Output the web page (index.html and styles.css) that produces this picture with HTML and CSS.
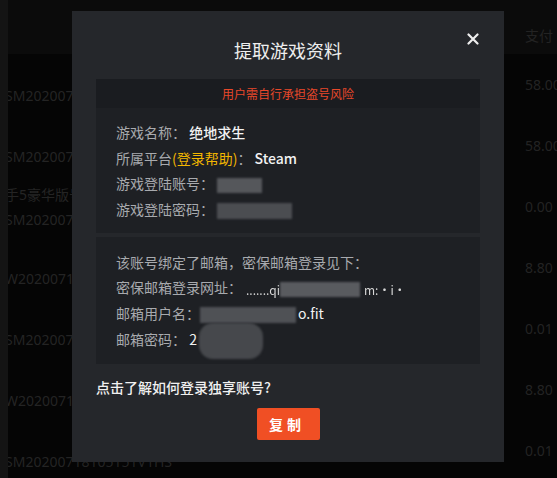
FILE: index.html
```html
<!DOCTYPE html>
<html lang="zh">
<head>
<meta charset="utf-8">
<title>提取游戏资料</title>
<link rel="stylesheet" href="styles.css">
</head>
<body>
<div class="page">
  <div class="strip"></div>
  <div class="main">
    <div class="thead"><div class="c1"></div><div class="c2">支付</div></div>
    <div class="row"><div class="c1 off">SM20200718105151V1HS</div><div class="c2">58.00</div></div>
    <div class="row"><div class="c1 off">SM20200718105151V1HS</div><div class="c2">58.00</div></div>
    <div class="row"><div class="c1"><div>手5豪华版号</div><div>SM20200718105151V1HS</div></div><div class="c2">0.00</div></div>
    <div class="row"><div class="c1 off">W20200718105151V1HS</div><div class="c2">8.80</div></div>
    <div class="row"><div class="c1 off">SM20200718105151V1HS</div><div class="c2">0.01</div></div>
    <div class="row"><div class="c1 off">W20200718105151V1HS</div><div class="c2">8.80</div></div>
    <div class="row"><div class="c1 off">SM20200718105151V1HS</div><div class="c2">0.01</div></div>
  </div>
</div>

<div class="modal">
  <div class="modal-head">
    <h2 class="title">提取游戏资料</h2>
    <button class="close" aria-label="关闭">
      <svg width="12" height="12" viewBox="0 0 12 12"><path d="M1.5 1.5 L10.5 10.5 M10.5 1.5 L1.5 10.5" stroke="#eeeeee" stroke-width="2.2" stroke-linecap="round"/></svg>
    </button>
  </div>

  <div class="box">
    <div class="warn">用户需自行承担盗号风险</div>
    <div class="box-body">
      <div class="line"><span class="lbl">游戏名称：</span> <span class="val">绝地求生</span></div>
      <div class="line"><span class="lbl">所属平台<span class="help">(登录帮助)</span>：</span> <span class="val">Steam</span></div>
      <div class="line"><span class="lbl">游戏登陆账号：</span><span class="mask m1"></span></div>
      <div class="line"><span class="lbl">游戏登陆密码：</span><span class="mask m2"></span></div>
    </div>
  </div>

  <div class="box box2">
    <div class="box-body b2">
      <div class="line"><span class="lbl">该账号绑定了邮箱，密保邮箱登录见下：</span></div>
      <div class="line"><span class="lbl">密保邮箱登录网址：</span><span class="fuzz">.......qi</span><span class="mask m3"></span><span class="fuzz">m:·i·</span></div>
      <div class="line"><span class="lbl">邮箱用户名：</span><span class="mask m4"></span><span class="val thin">o.fit</span></div>
      <div class="line"><span class="lbl">邮箱密码：</span> <span class="val thin">2</span><span class="mask m5"></span></div>
    </div>
  </div>

  <div class="ask">点击了解如何登录独享账号?</div>
  <div class="actions"><button class="copy">复制</button></div>
</div>
</body>
</html>
```

FILE: styles.css
```css
* { box-sizing: border-box; }
html, body { margin: 0; padding: 0; }
body {
  width: 557px;
  height: 478px;
  overflow: hidden;
  background: #050505;
  font-family: "Noto Sans", "Noto Sans CJK SC", sans-serif;
  position: relative;
}
.page { display: flex; height: 478px; }
.strip { width: 8px; background: #141414; flex: none; }
.main { flex: 1; overflow: hidden; }
.thead, .row {
  display: grid;
  grid-template-columns: 517px 1fr;
  font-size: 14px;
  color: #242424;
}
.thead { height: 54px; background: #0b0b0b; align-items: center; }
.thead .c2 { padding-top: 16px; }
.row { height: 61px; align-items: center; }
.c1 { white-space: nowrap; margin-left: -3px; line-height: 25px; }
.c1.off { padding-top: 22px; }
.c2 { white-space: nowrap; color: #232323; }

.modal {
  position: absolute;
  left: 72px;
  top: 11px;
  width: 432px;
  height: 451px;
  background: #25272b;
  padding: 27px 24px 23px;
  display: flex;
  flex-direction: column;
  font-family: "Noto Sans CJK SC", "Noto Sans", sans-serif;
}
.modal-head { position: relative; height: 24px; margin-bottom: 17px; }
.title {
  margin: 0;
  text-align: center;
  font-size: 18px;
  line-height: 24px;
  font-weight: 400;
  color: #eeeeee;
}
.close {
  position: absolute;
  right: -1px;
  top: -7px;
  width: 16px;
  height: 16px;
  padding: 2px;
  border: 0;
  background: none;
}
.box { background: #1e2024; }
.warn {
  height: 29px;
  line-height: 29px;
  background: #1a1c20;
  text-align: center;
  color: #e8482a;
  font-size: 12px;
}
.box-body { padding: 12px 20px 10px; }
.box2 { margin-top: 4px; }
.b2 { padding: 13px 20px 11px; }
.line {
  font-size: 14px;
  line-height: 25.7px;
  height: 25.7px;
  color: #a8aaae;
  white-space: nowrap;
}
.help { color: #f2b600; }
.val { color: #f2f2f2; font-weight: 500; }
.val.thin { font-weight: 400; }
.mask {
  display: inline-block;
  vertical-align: middle;
  background: #55575b;
  filter: blur(1px);
}
.m1 { width: 45px; height: 15px; margin-left: 3px; }
.m2 { width: 75px; height: 16px; margin-left: 3px; background: #4b4d51; }
.m3 { width: 80px; height: 15px; background: #595b5f; }
.m4 { width: 96px; height: 16px; background: #4f5155; margin-right: 2px; }
.m5 {
  width: 64px;
  height: 36px;
  margin: -10px 0;
  border-radius: 14px;
  background: #46484c;
  margin-left: 2px;
}
.fuzz {
  display: inline-block;
  vertical-align: middle;
  font-size: 12px;
  color: #d8d8d8;
  filter: blur(0.6px);
  margin-left: 4px;
}
.ask {
  margin-top: 13px;
  font-size: 14px;
  line-height: 20px;
  color: #f0f0f0;
  font-weight: 500;
}
.actions { margin-top: 11px; display: flex; justify-content: center; }
.copy {
  width: 63px;
  height: 32px;
  border: 0;
  border-radius: 2px;
  background: #f04f24;
  color: #ffffff;
  font-family: "Noto Sans CJK SC", sans-serif;
  font-size: 14px;
  font-weight: 700;
  letter-spacing: 4px;
  padding-left: 4px;
}
```
